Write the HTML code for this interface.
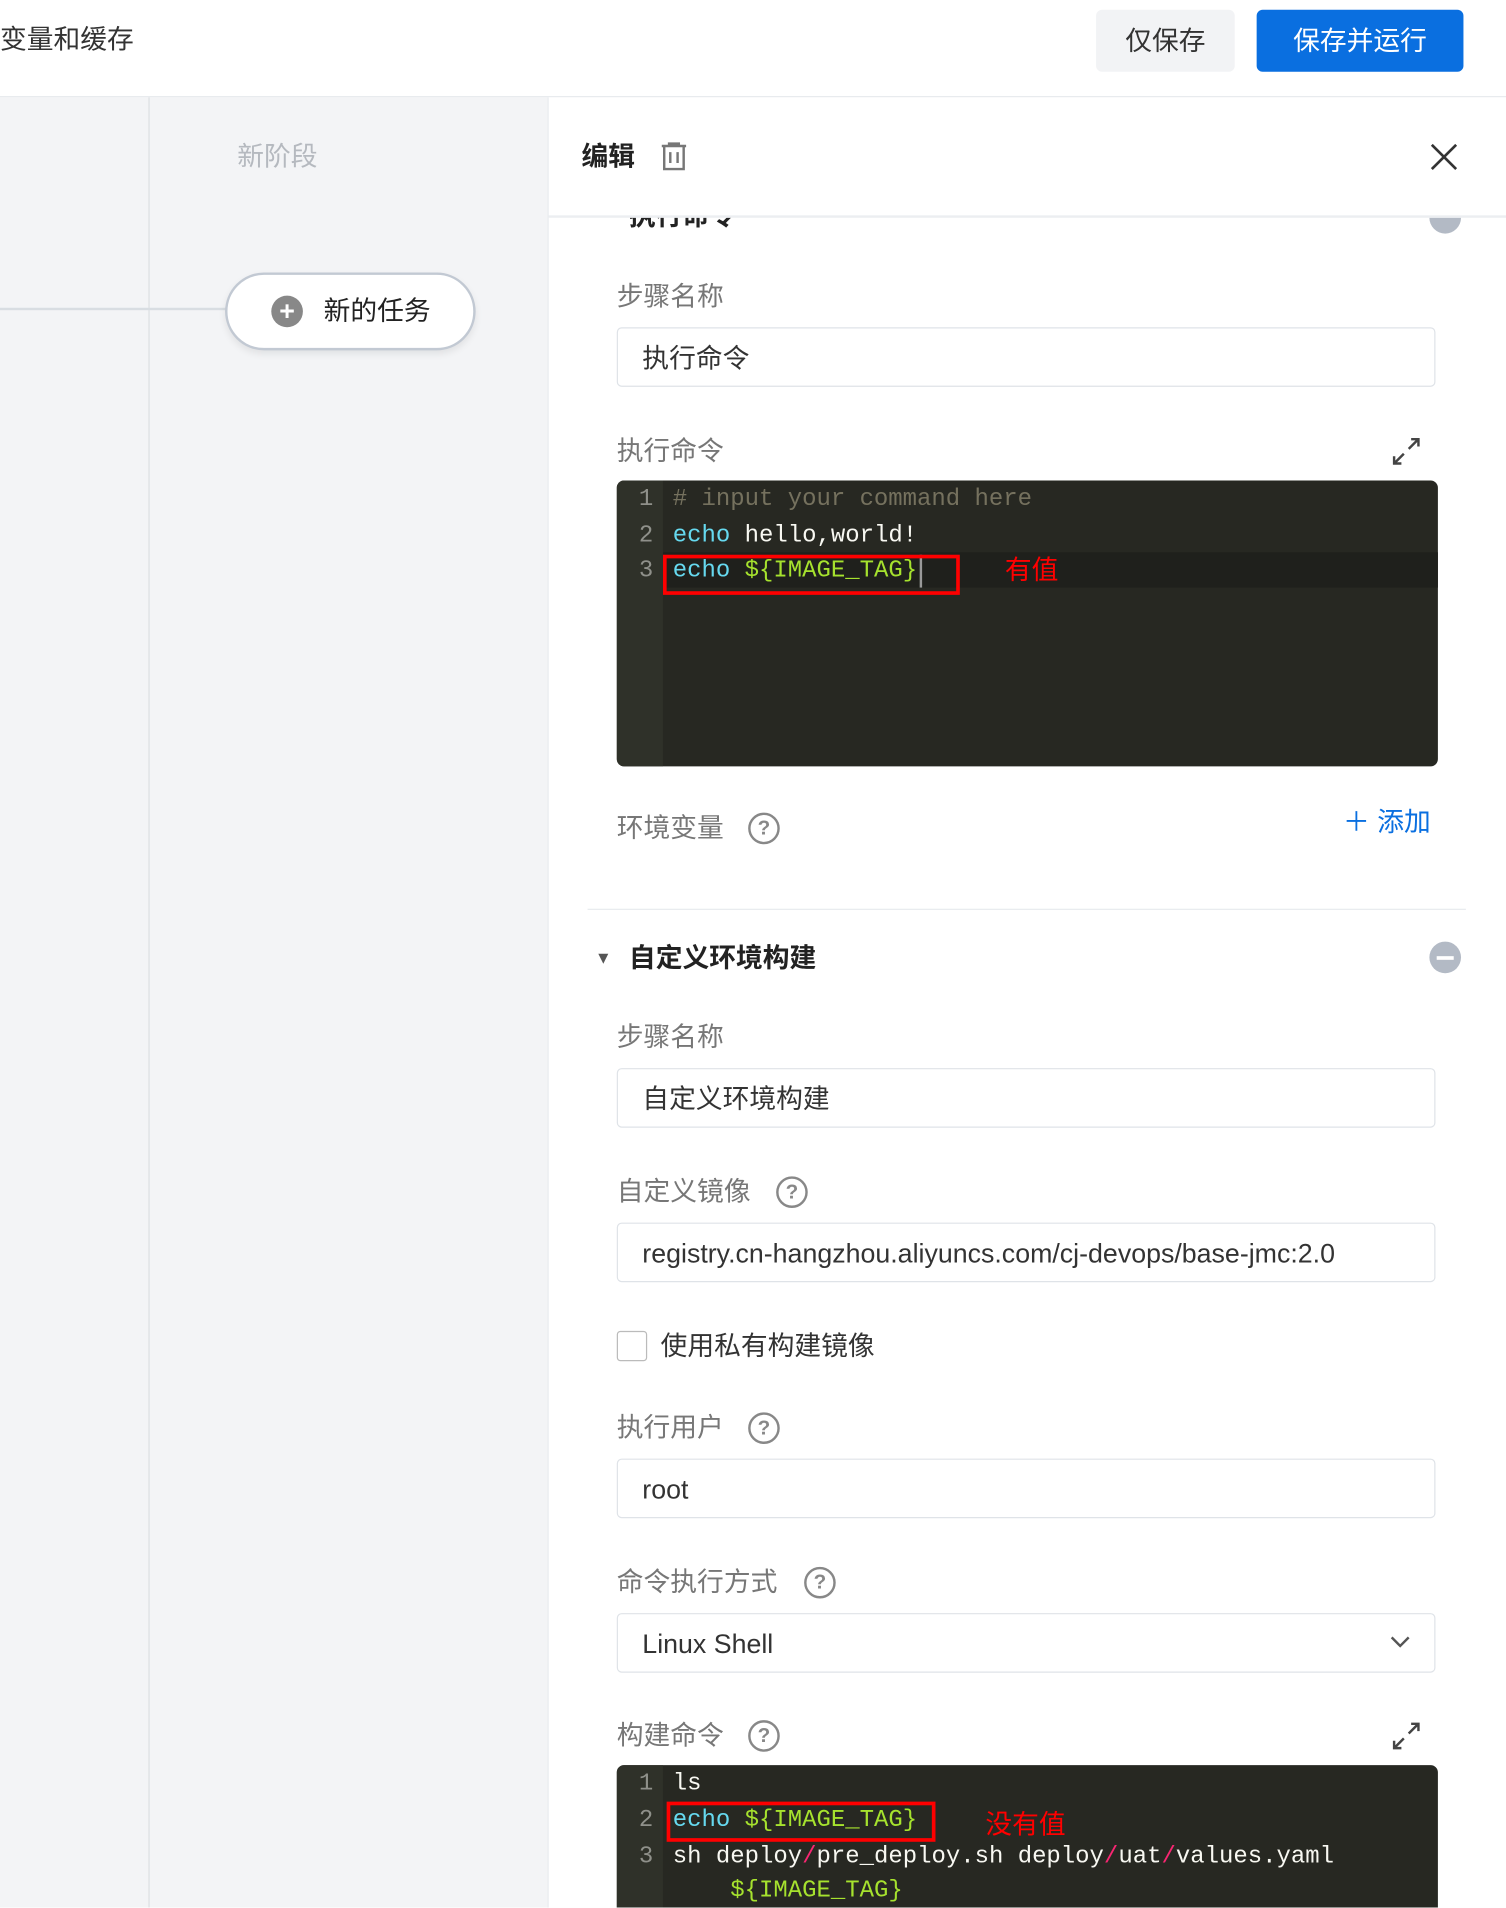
<!DOCTYPE html>
<html><head><meta charset="utf-8">
<style>
html,body{margin:0;padding:0;width:1506px;height:1908px;overflow:hidden;background:#fff;}
#w{position:absolute;left:0;top:0;width:1238px;height:1568px;transform:scale(1.2165);transform-origin:0 0;overflow:hidden;font-family:"Liberation Sans","Noto Sans CJK SC",sans-serif;}
.a{position:absolute;white-space:nowrap;}
.t{font-size:22px;line-height:30px;}
.lbl{color:#777;}
.inp{position:absolute;left:507px;width:673px;height:49px;border:1px solid #dfe3e8;border-radius:4px;box-sizing:border-box;background:#fff;}
.inp span{position:absolute;left:20px;top:10px;font-size:22px;line-height:30px;color:#333;}
.q{position:absolute;width:26px;height:26px;border:2px solid #888;border-radius:50%;box-sizing:border-box;font-size:17px;line-height:22px;text-align:center;color:#888;font-weight:bold;}
.code{position:absolute;left:507px;width:675px;background:#272822;border-radius:6px;overflow:hidden;font-family:"Liberation Mono",monospace;font-size:19.7px;}
.gut{position:absolute;left:0;top:0;bottom:0;width:38px;background:#2f3129;}
.ln{position:absolute;left:0;width:30px;text-align:right;color:#8f908a;line-height:30px;}
.cl{position:absolute;left:46px;line-height:30px;color:#f8f8f2;white-space:pre;}
.k{color:#66d9ef}.v{color:#a6e22e}.s{color:#f92672}
</style></head><body><div id="w">
<div class="a" style="left:0;top:0;width:1238px;height:79px;background:#fff;border-bottom:1px solid #e6e9ed;"></div>
<div class="a t" style="left:0;top:18px;color:#333;">变量和缓存</div>
<div class="a" style="left:901px;top:8px;width:114px;height:51px;background:#f2f3f5;border-radius:5px;font-size:22px;line-height:51px;text-align:center;color:#333;">仅保存</div>
<div class="a" style="left:1033px;top:8px;width:170px;height:51px;background:#0a6fe0;border-radius:5px;font-size:22px;line-height:51px;text-align:center;color:#fff;">保存并运行</div>
<div class="a" style="left:0;top:80px;width:450px;height:1500px;background:#f3f4f6;"></div>
<div class="a" style="left:122px;top:80px;width:1px;height:1500px;background:#dcdfe3;"></div>
<div class="a t" style="left:195px;top:114px;color:#b5b9bf;">新阶段</div>
<div class="a" style="left:0;top:253px;width:186px;height:2px;background:#d8dde2;"></div>
<div class="a" style="left:185px;top:224px;width:206px;height:64px;border:2px solid #c2c9d3;border-radius:33px;box-sizing:border-box;background:#fff;box-shadow:0 3px 6px rgba(0,0,0,0.08);"></div>
<div class="a" style="left:223px;top:243px;width:26px;height:26px;border-radius:50%;background:#888;color:#fff;text-align:center;font-size:22px;line-height:26px;font-weight:bold;">+</div>
<div class="a t" style="left:266px;top:241px;color:#222;">新的任务</div>
<div class="a" style="left:450px;top:80px;width:788px;height:1500px;background:#fff;border-left:1px solid #e6e9ed;"></div>
<div class="a" style="left:450px;top:179px;width:788px;height:1400px;overflow:hidden;">
  <div class="a" style="left:46px;top:-13px;font-size:12px;color:#333;">▾</div>
  <div class="a t" style="left:67px;top:-16px;color:#222;font-weight:bold;">执行命令</div>
  <div class="a" style="left:725px;top:-13px;width:26px;height:26px;border-radius:50%;background:#b3bac5;"></div>
</div>
<div class="a t" style="left:478px;top:114px;color:#222;font-weight:bold;">编辑</div>
<svg class="a" style="left:541px;top:116px" width="26" height="26" viewBox="0 0 26 26" fill="none" stroke="#777" stroke-width="2"><path d="M3 4h20M9 4V2h8v2M5 4v19h16V4M10 9v9M16 9v9"/></svg>
<svg class="a" style="left:1175px;top:117px" width="24" height="24" viewBox="0 0 24 24" stroke="#333" stroke-width="2.2"><path d="M2 2L22 22M22 2L2 22"/></svg>
<div class="a" style="left:451px;top:177px;width:787px;height:2px;background:#eceef1;"></div>

<div class="a t lbl" style="left:507px;top:229px;">步骤名称</div>
<div class="inp" style="top:269px;"><span>执行命令</span></div>
<div class="a t lbl" style="left:507px;top:356px;">执行命令</div>
<svg class="a" style="left:1144px;top:359px" width="24" height="24" viewBox="0 0 24 24" fill="none" stroke="#444" stroke-width="2"><path d="M14 10L22 2M16 2h6v6M10 14L2 22M2 16v6h6"/></svg>
<div class="code" style="top:395px;height:235px;">
  <div class="gut"></div>
  <div class="a" style="left:38px;top:59px;width:640px;height:29px;background:#1f201c;"></div>
  <div class="ln" style="top:0">1</div><div class="ln" style="top:30px">2</div><div class="ln" style="top:59px">3</div>
  <div class="cl" style="top:0;color:#75715e;"># input your command here</div>
  <div class="cl" style="top:30px;"><span class="k">echo</span> hello,world!</div>
  <div class="cl" style="top:59px;"><span class="k">echo</span> <span class="v">${IMAGE_TAG}</span></div>
  <div class="a" style="left:249px;top:61px;width:2px;height:27px;background:#999;"></div>
</div>
<div class="a" style="left:545px;top:456px;width:244px;height:33px;border:3px solid #f00;box-sizing:border-box;"></div>
<div class="a t" style="left:826px;top:454px;color:#f00;">有值</div>

<div class="a t lbl" style="left:507px;top:666px;">环境变量</div>
<div class="q" style="left:615px;top:668px;">?</div>
<div class="a t" style="left:1104px;top:661px;color:#0a6fe0;">＋ 添加</div>
<div class="a" style="left:483px;top:747px;width:722px;height:1px;background:#e8ebee;"></div>

<div class="a" style="left:489px;top:779px;font-size:14px;color:#555;">▼</div>
<div class="a t" style="left:517px;top:773px;color:#222;font-weight:bold;">自定义环境构建</div>
<div class="a" style="left:1175px;top:774px;width:26px;height:26px;border-radius:50%;background:#b3bac5;"><div style="position:absolute;left:6px;top:12px;width:14px;height:3px;background:#fff;"></div></div>

<div class="a t lbl" style="left:507px;top:838px;">步骤名称</div>
<div class="inp" style="top:878px;"><span>自定义环境构建</span></div>
<div class="a t lbl" style="left:507px;top:965px;">自定义镜像</div>
<div class="q" style="left:638px;top:967px;">?</div>
<div class="inp" style="top:1005px;"><span>registry.cn-hangzhou.aliyuncs.com/cj-devops/base-jmc:2.0</span></div>
<div class="a" style="left:507px;top:1094px;width:25px;height:25px;border:1px solid #bbb;border-radius:3px;box-sizing:border-box;"></div>
<div class="a t" style="left:543px;top:1092px;color:#333;">使用私有构建镜像</div>
<div class="a t lbl" style="left:507px;top:1159px;">执行用户</div>
<div class="q" style="left:615px;top:1161px;">?</div>
<div class="inp" style="top:1199px;"><span>root</span></div>
<div class="a t lbl" style="left:507px;top:1286px;">命令执行方式</div>
<div class="q" style="left:661px;top:1288px;">?</div>
<div class="inp" style="top:1326px;"><span>Linux Shell</span></div>
<svg class="a" style="left:1142px;top:1344px" width="18" height="12" viewBox="0 0 18 12" fill="none" stroke="#555" stroke-width="2"><path d="M2 2l7 7 7-7"/></svg>
<div class="a t lbl" style="left:507px;top:1412px;">构建命令</div>
<div class="q" style="left:615px;top:1414px;">?</div>
<svg class="a" style="left:1144px;top:1415px" width="24" height="24" viewBox="0 0 24 24" fill="none" stroke="#444" stroke-width="2"><path d="M14 10L22 2M16 2h6v6M10 14L2 22M2 16v6h6"/></svg>
<div class="code" style="top:1451px;height:140px;">
  <div class="gut"></div>
  <div class="ln" style="top:0">1</div><div class="ln" style="top:30px">2</div><div class="ln" style="top:60px">3</div>
  <div class="cl" style="top:0;">ls</div>
  <div class="cl" style="top:30px;"><span class="k">echo</span> <span class="v">${IMAGE_TAG}</span></div>
  <div class="cl" style="top:60px;">sh deploy<span class="s">/</span>pre_deploy.sh deploy<span class="s">/</span>uat<span class="s">/</span>values.yaml</div>
  <div class="cl" style="top:88px;">    <span class="v">${IMAGE_TAG}</span></div>
</div>
<div class="a" style="left:548px;top:1481px;width:221px;height:33px;border:3px solid #f00;box-sizing:border-box;"></div>
<div class="a t" style="left:810px;top:1485px;color:#f00;">没有值</div>
</div></body></html>
